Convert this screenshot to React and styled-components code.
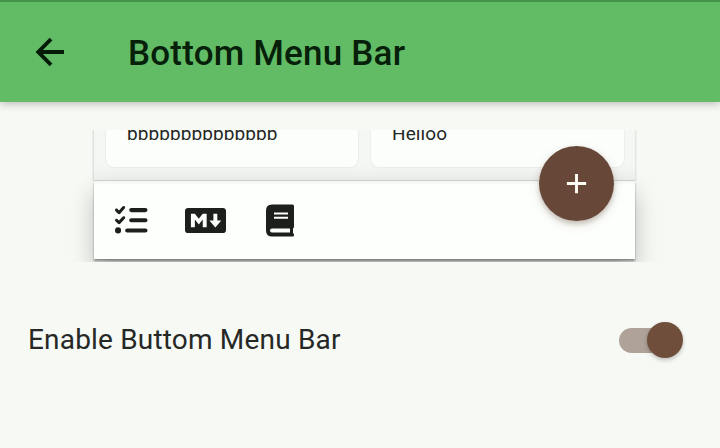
import React from "react";
import styled, { createGlobalStyle } from "styled-components";
import { FaMarkdown } from "react-icons/fa";
import { FaListCheck } from "react-icons/fa6";

const GlobalStyle = createGlobalStyle`
  * { box-sizing: border-box; }
  body {
    margin: 0;
    overflow: hidden;
    background: #f7f9f5;
    font-family: Roboto, "Liberation Sans", sans-serif;
  }
`;

const Screen = styled.main`
  width: 720px;
  height: 448px;
  display: flex;
  flex-direction: column;
  background: #f7f9f5;
`;

const AppBar = styled.header`
  flex: none;
  height: 102px;
  display: flex;
  align-items: center;
  padding: 0 29px;
  gap: 57px;
  background: #62bc66;
  border-top: 2px solid #43934a;
  box-shadow: 0 2px 8px rgba(0, 0, 0, 0.24);
`;

const BackButton = styled.button`
  display: flex;
  padding: 0;
  border: 0;
  background: none;
  color: #061a08;
`;

const LineIcon = styled.svg`
  display: block;
  width: ${(p) => p.$size}px;
  height: ${(p) => p.$size}px;
  fill: none;
  stroke: currentColor;
  stroke-width: ${(p) => p.$weight};
`;

const Title = styled.h1`
  margin: 0;
  padding-top: 3px;
  font-size: 35px;
  line-height: 42px;
  font-weight: 500;
  letter-spacing: 0.2px;
  color: #062009;
  white-space: nowrap;
`;

const Preview = styled.section`
  position: relative;
  flex: none;
  width: 592px;
  height: 132px;
  margin: 28px 0 0 66px;
  padding: 0 23px 0 28px;
  overflow: hidden;
`;

const NoteGrid = styled.div`
  display: grid;
  grid-template-columns: 252px 253px;
  gap: 13px;
  height: 51px;
  padding: 0 0 14px 12px;
  background: linear-gradient(#f5f7f4 65%, #eff1ee);
  box-shadow: -1px 0 2px rgba(0, 0, 0, 0.14), 1px 0 2px rgba(0, 0, 0, 0.1);
  border-bottom: 1px solid #d3d6d2;
`;

const NoteCard = styled.article`
  height: 37px;
  padding-left: 21px;
  overflow: hidden;
  background: #fcfefb;
  border-radius: 0 0 8px 8px;
  box-shadow: 0 0 2px rgba(0, 0, 0, 0.13);
`;

const NoteText = styled.p`
  margin: -8px 0 0;
  font-size: 19px;
  line-height: 24px;
  letter-spacing: 0.09px;
  color: #252825;
`;

const BottomBar = styled.nav`
  height: 78px;
  display: flex;
  align-items: center;
  padding: 1px 0 0 21px;
  color: #1c1f1b;
  background: linear-gradient(#f3f5f2, #fdfffc 4px);
  box-shadow: 0 2px 2px rgba(0, 0, 0, 0.36), 0 12px 22px rgba(0, 0, 0, 0.24);
`;

const ChecklistIcon = styled(FaListCheck)`
  width: 32.5px;
  height: 32.5px;
  margin-right: 37.5px;
`;

const MarkdownIcon = styled(FaMarkdown)`
  width: 41px;
  height: 33px;
  margin-right: 40px;
`;

const BookIcon = styled.svg`
  width: 28px;
  height: 33px;
  fill: currentColor;
`;

const ActionButton = styled.button`
  position: absolute;
  left: 473px;
  top: 16px;
  width: 75px;
  height: 75px;
  display: grid;
  place-items: center;
  padding: 0;
  border: 0;
  border-radius: 50%;
  background: #674838;
  color: #fffdf8;
  box-shadow: 0 3px 5px rgba(90, 60, 45, 0.28), 0 4px 12px rgba(70, 50, 40, 0.1);
`;

const SettingRow = styled.label`
  display: flex;
  align-items: center;
  justify-content: space-between;
  height: 60px;
  margin-top: 48px;
  padding: 0 37px 0 28px;
`;

const SettingName = styled.span`
  font-size: 28px;
  line-height: 36px;
  letter-spacing: 0.18px;
  color: #252825;
`;

const SwitchTrack = styled.span`
  display: flex;
  align-items: center;
  justify-content: flex-end;
  width: 60px;
  height: 25px;
  margin-right: 4px;
  border-radius: 13px;
  background: #afa299;
`;

const SwitchThumb = styled.span`
  flex: none;
  width: 36px;
  height: 36px;
  margin-right: -4px;
  border-radius: 50%;
  background: #704e3c;
  box-shadow: 0 2px 4px rgba(0, 0, 0, 0.24);
`;

export default function App() {
  return (
    <Screen>
      <GlobalStyle />
      <AppBar>
        <BackButton aria-label="Back">
          <LineIcon $size={42} $weight={2.2} viewBox="0 0 24 24">
            <path d="M20 12H5.5M12.6 4.7 5.3 12l7.3 7.3" />
          </LineIcon>
        </BackButton>
        <Title>Bottom Menu Bar</Title>
      </AppBar>
      <Preview>
        <NoteGrid>
          <NoteCard>
            <NoteText>bbbbbbbbbbbbbb</NoteText>
          </NoteCard>
          <NoteCard>
            <NoteText>Helloo</NoteText>
          </NoteCard>
        </NoteGrid>
        <BottomBar>
          <ChecklistIcon />
          <MarkdownIcon />
          <BookIcon viewBox="0 0 28 33">
            <path
              fillRule="evenodd"
              d="M6 .5H26.5Q28 .5 28 2V22.5Q28 24 27 24.5V29Q28 29.5 28 30.5V31.5Q28 32.5 27 32.5H6Q0 32.5 0 26.5V6.5Q0 .5 6 .5ZM8 8.4V10.4H22V8.4ZM8 12.7V14.7H22V12.7ZM6 24.5Q4 24.5 4 26.5T6 28.5H24V24.5Z"
            />
          </BookIcon>
        </BottomBar>
        <ActionButton aria-label="Add note">
          <LineIcon $size={33} $weight={2.1} viewBox="0 0 24 24">
            <path d="M12 5v14M5 12h14" />
          </LineIcon>
        </ActionButton>
      </Preview>
      <SettingRow>
        <SettingName>Enable Buttom Menu Bar</SettingName>
        <SwitchTrack role="switch" aria-checked="true">
          <SwitchThumb />
        </SwitchTrack>
      </SettingRow>
    </Screen>
  );
}
